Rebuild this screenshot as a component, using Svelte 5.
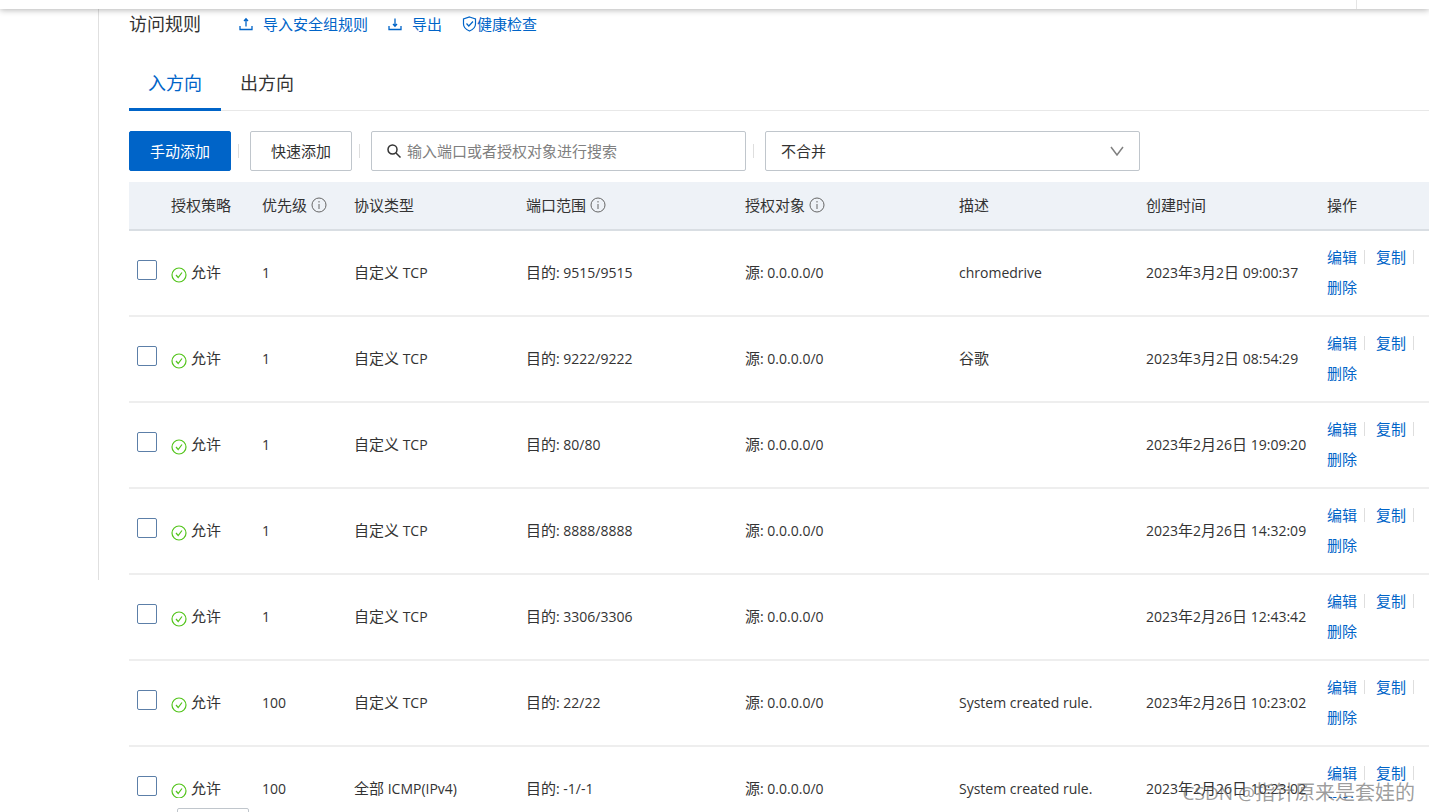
<script>
	const columns = [
		{ title: '授权策略' },
		{ title: '优先级', help: true },
		{ title: '协议类型' },
		{ title: '端口范围', help: true },
		{ title: '授权对象', help: true },
		{ title: '描述' },
		{ title: '创建时间' },
		{ title: '操作' }
	];

	const rules = [
		{ priority: 1, protocol: '自定义 TCP', port: '9515/9515', desc: 'chromedrive', time: '2023年3月2日 09:00:37' },
		{ priority: 1, protocol: '自定义 TCP', port: '9222/9222', desc: '谷歌', time: '2023年3月2日 08:54:29' },
		{ priority: 1, protocol: '自定义 TCP', port: '80/80', desc: '', time: '2023年2月26日 19:09:20' },
		{ priority: 1, protocol: '自定义 TCP', port: '8888/8888', desc: '', time: '2023年2月26日 14:32:09' },
		{ priority: 1, protocol: '自定义 TCP', port: '3306/3306', desc: '', time: '2023年2月26日 12:43:42' },
		{ priority: 100, protocol: '自定义 TCP', port: '22/22', desc: 'System created rule.', time: '2023年2月26日 10:23:02' },
		{ priority: 100, protocol: '全部 ICMP(IPv4)', port: '-1/-1', desc: 'System created rule.', time: '2023年2月26日 10:23:02' }
	];

	let tab = $state('in');
	let keyword = $state('');
	let merge = $state('none');
	let selected = $state([]);

	let shown = $derived(rules.filter((r) => r.port.includes(keyword)));

	// split into latin and chinese runs, latin is set one size smaller
	function runs(text) {
		return String(text).match(/[\x00-\x7f]+|[^\x00-\x7f]+/g) ?? [];
	}
</script>

{#snippet mixed(text)}
	{#each runs(text) as run}<span class:latin={run.charCodeAt(0) < 128}>{run}</span>{/each}
{/snippet}

<div class="console">
	<header class="topbar"><div class="user"></div></header>

	<div class="body">
		<aside></aside>

		<main>
			<div class="heading">
				<h2>访问规则</h2>
				<a href="#import">
					<svg class="transfer" viewBox="0 0 14 14">
						<path d="M1 9v3.500h12V9" />
						<path d="M7 9.500V2M5 4l2-2.200L9 4" />
					</svg>
					导入安全组规则
				</a>
				<a href="#export">
					<svg class="transfer" viewBox="0 0 14 14">
						<path d="M1 9v3.500h12V9" />
						<path d="M7 1.500V9M5 7l2 2.200L9 7" />
					</svg>
					导出
				</a>
				<a href="#check" class="check">
					<svg viewBox="0 0 14 16">
						<path d="M7 1 13 3v5c0 3.500-2.500 5.500-6 7-3.500-1.500-6-3.500-6-7V3z" />
						<path d="m4 7.500 2.300 2.500L10.500 5.500" />
					</svg>健康检查
				</a>
			</div>

			<nav class="tabs">
				<button class:active={tab === 'in'} onclick={() => (tab = 'in')}>入方向</button>
				<button class:active={tab === 'out'} onclick={() => (tab = 'out')}>出方向</button>
			</nav>

			<div class="toolbar">
				<button class="primary">手动添加</button>
				<i class="bar"></i>
				<button>快速添加</button>
				<i class="bar"></i>
				<label class="field search">
					<svg viewBox="0 0 14 14">
						<circle cx="5.500" cy="5.500" r="4.500" />
						<path d="m9 9 4.500 4.500" />
					</svg>
					<input type="text" aria-label="搜索" placeholder="输入端口或者授权对象进行搜索" bind:value={keyword} />
				</label>
				<i class="bar"></i>
				<label class="field merge">
					<select aria-label="合并方式" bind:value={merge}>
						<option value="none">不合并</option>
					</select>
					<svg viewBox="0 0 14 10"><path d="m1 1 6 8 6-8" /></svg>
				</label>
			</div>

			<table>
				<colgroup>
					<col class="w-check" />
					<col class="w-policy" />
					<col class="w-priority" />
					<col class="w-protocol" />
					<col class="w-port" />
					<col class="w-source" />
					<col class="w-desc" />
					<col class="w-time" />
					<col class="w-action" />
				</colgroup>
				<thead>
					<tr>
						<th></th>
						{#each columns as col}
							<th>
								<span class="title">
									{col.title}
									{#if col.help}
										<svg class="help" viewBox="0 0 16 16">
											<circle cx="8" cy="8" r="7" />
											<path d="M8 7v5M8 4v1.500" />
										</svg>
									{/if}
								</span>
							</th>
						{/each}
					</tr>
				</thead>
				<tbody>
					{#each shown as rule, i}
						<tr>
							<td><input type="checkbox" aria-label="选择规则" value={i} bind:group={selected} /></td>
							<td>
								<span class="allow">
									<svg viewBox="0 0 16 16">
										<circle cx="8" cy="8" r="7" />
										<path d="m5 8 2.200 2.500L11 5.500" />
									</svg>
									允许
								</span>
							</td>
							<td>{@render mixed(rule.priority)}</td>
							<td>{@render mixed(rule.protocol)}</td>
							<td>{@render mixed('目的: ' + rule.port)}</td>
							<td>{@render mixed('源: 0.0.0.0/0')}</td>
							<td>{@render mixed(rule.desc)}</td>
							<td>{@render mixed(rule.time)}</td>
							<td class="actions">
								<div>
									<span><a href="#edit">编辑</a><i class="bar"></i></span>
									<span><a href="#copy">复制</a><i class="bar"></i></span>
									<span><a href="#delete">删除</a></span>
								</div>
							</td>
						</tr>
					{/each}
				</tbody>
			</table>
		</main>
	</div>

	<footer><button aria-label="批量操作"></button></footer>
	<div class="watermark"><span>CSDN @</span>指针原来是套娃的</div>
</div>

<style>
	:global(body) {
		background: #fff;
	}

	.console {
		position: relative;
		height: 100vh;
		overflow: hidden;
		color: #333;
		font-family: 'Open Sans', 'Noto Sans CJK SC', sans-serif;
		font-size: 15px;
		line-height: 30px;
	}

	a {
		color: #0064c8;
		text-decoration: none;
	}

	svg {
		fill: none;
		stroke: currentColor;
		flex: none;
	}

	button,
	input,
	select {
		font: inherit;
		color: inherit;
	}

	.topbar {
		position: relative;
		display: flex;
		justify-content: flex-end;
		height: 9px;
		background: #fff;
		box-shadow: 0 1px 6px rgba(0, 0, 0, 0.3);
	}

	.user {
		width: 72px;
		border-left: 1px solid #e5e5e5;
	}

	.body {
		display: flex;
		align-items: flex-start;
	}

	aside {
		flex: none;
		box-sizing: border-box;
		width: 99px;
		height: 571px;
		border-right: 1px solid #e0e0e0;
	}

	main {
		flex: 1;
		min-width: 0;
		padding-left: 30px;
	}

	.heading {
		display: flex;
		align-items: center;
		height: 30px;
		gap: 20px;
	}

	h2 {
		margin: 0 18px 0 0;
		font-size: 18px;
		font-weight: 400;
	}

	.heading a {
		display: flex;
		align-items: center;
		gap: 10px;
	}

	.transfer {
		width: 14px;
		height: 14px;
		stroke-width: 1.3;
	}

	.heading .check {
		gap: 0;
	}

	.check svg {
		width: 15px;
		height: 16px;
		stroke-width: 1.2;
	}

	.tabs {
		display: flex;
		margin-top: 18px;
		border-bottom: 1px solid #e8e8e8;
	}

	.tabs button {
		height: 54px;
		margin-bottom: -1px;
		padding: 0 19px;
		border: 0;
		border-bottom: 3px solid transparent;
		background: none;
		font-size: 18px;
	}

	.tabs .active {
		color: #0064c8;
		border-color: #0064c8;
	}

	.toolbar {
		display: flex;
		align-items: center;
		margin: 20px 0 11px;
	}

	.toolbar button {
		width: 102px;
		height: 40px;
		padding: 0;
		border: 1px solid #c0c6cc;
		border-radius: 2px;
		background: #fff;
	}

	.toolbar .primary {
		color: #fff;
		background: #0064c8;
		border-color: #0064c8;
	}

	.bar {
		width: 1px;
		height: 14px;
		background: #dedede;
	}

	.toolbar .bar {
		margin: 0 11px 0 7px;
	}

	.field {
		display: flex;
		align-items: center;
		box-sizing: border-box;
		width: 375px;
		height: 40px;
		padding: 0 15px;
		border: 1px solid #c0c6cc;
		border-radius: 2px;
	}

	.search svg {
		width: 14px;
		height: 14px;
		stroke-width: 1.5;
		margin-right: 6px;
	}

	.search input {
		flex: 1;
		min-width: 0;
		padding: 0;
		border: 0;
		outline: 0;
	}

	.search input::placeholder {
		color: #808080;
		opacity: 1;
	}

	.merge select {
		flex: 1;
		padding: 0;
		border: 0;
		outline: 0;
		appearance: none;
		background: none;
	}

	.merge svg {
		width: 14px;
		height: 10px;
		color: #808080;
		stroke-width: 1.5;
	}

	table {
		width: 100%;
		table-layout: fixed;
		border-collapse: separate;
		border-spacing: 0;
	}

	.w-check { width: 34px; }
	.w-policy { width: 91px; }
	.w-priority { width: 92px; }
	.w-protocol { width: 172px; }
	.w-port { width: 219px; }
	.w-source { width: 214px; }
	.w-desc { width: 187px; }
	.w-time { width: 181px; }
	.w-action { width: 110px; }

	th {
		height: 45px;
		padding: 0 8px 2px;
		background: #eef2f7;
		border-bottom: 2px solid #d9dee3;
		font-weight: 400;
		text-align: left;
		white-space: nowrap;
	}

	td {
		padding: 11px 8px 13px;
		border-bottom: 2px solid #eee;
		white-space: nowrap;
	}

	.title,
	.allow {
		display: flex;
		align-items: center;
		gap: 4px;
	}

	.help,
	.allow svg {
		width: 16px;
		height: 16px;
	}

	.help {
		color: #666;
	}

	.allow svg {
		margin-top: 6px;
		color: #52c41a;
		stroke-width: 1.2;
	}

	.latin {
		font-size: 14px;
		white-space: pre;
	}

	input[type='checkbox'] {
		display: block;
		width: 20px;
		height: 20px;
		margin: 0 0 4px;
		appearance: none;
		border: 1px solid #5c7fa8;
		border-radius: 2px;
		background: #fff;
	}

	input[type='checkbox']:checked {
		background: #0064c8;
	}

	.actions {
		padding-right: 0;
	}

	.actions div {
		display: flex;
		flex-wrap: wrap;
	}

	.actions span {
		display: flex;
		align-items: center;
	}

	.actions .bar {
		margin: 0 11px 0 7px;
	}

	footer {
		position: absolute;
		right: 0;
		bottom: 0;
		left: 129px;
		height: 14px;
		padding-left: 48px;
		overflow: hidden;
		background: #fff;
	}

	footer button {
		display: block;
		width: 72px;
		height: 32px;
		margin-top: 10px;
		border: 1px solid #c0c6cc;
		border-radius: 2px;
		background: #fff;
	}

	.watermark {
		position: absolute;
		right: 14px;
		bottom: 4px;
		color: rgba(90, 90, 90, 0.6);
		font-size: 20px;
	}

	.watermark span {
		font-size: 19px;
	}
</style>
